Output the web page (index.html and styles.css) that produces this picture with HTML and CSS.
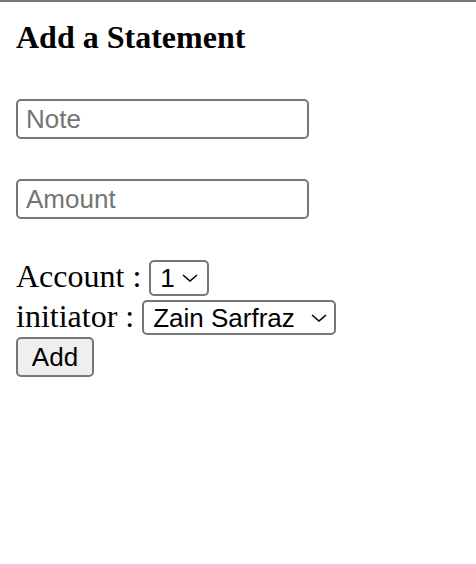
FILE: index.html
```html
<!DOCTYPE html>
<html lang="en">
<head>
<meta charset="utf-8">
<title>Add a Statement</title>
<link rel="stylesheet" href="styles.css">
</head>
<body>
<div class="topbar"></div>
<div class="page">
  <h3 class="title">Add a Statement</h3>
  <form class="form">
    <input class="field" type="text" placeholder="Note">
    <input class="field field-amount" type="text" placeholder="Amount">
    <div class="row row-account">
      <label class="label">Account :</label>
      <select class="select select-account"><option>1</option></select>
    </div>
    <div class="row row-initiator">
      <label class="label">initiator :</label>
      <select class="select select-initiator"><option>Zain Sarfraz</option></select>
    </div>
    <button class="btn" type="button">Add</button>
  </form>
</div>
</body>
</html>
```
FILE: styles.css
```css
html, body {
  margin: 0;
  padding: 0;
  background: #ffffff;
}
body {
  font-family: "Liberation Serif", "Times New Roman", serif;
  font-size: 32px;
  color: #000;
}
.topbar {
  height: 2px;
  background: #6f7a83;
}
.page {
  padding: 0 16px;
}
.title {
  margin: 18px 0 0;
  font-size: 32px;
  font-weight: bold;
  line-height: 35px;
}
.form {
  display: flex;
  flex-direction: column;
  align-items: flex-start;
}
.field {
  box-sizing: border-box;
  width: 293px;
  height: 40px;
  margin-top: 44px;
  padding: 0 8px;
  border: 2px solid #767676;
  border-radius: 5px;
  font-family: "Liberation Sans", Arial, sans-serif;
  font-size: 26px;
  color: #000;
  outline: none;
}
.field::placeholder {
  color: #757575;
}
.field-amount {
  margin-top: 40px;
}
.row {
  display: flex;
  align-items: baseline;
  gap: 8px;
}
.row-account {
  margin-top: 41px;
}
.row-initiator {
  margin-top: 4px;
}
.label {
  white-space: nowrap;
  line-height: 30px;
}
.select {
  appearance: none;
  -webkit-appearance: none;
  box-sizing: border-box;
  border: 2px solid #767676;
  border-radius: 5px;
  background-color: #fff;
  background-image: url("data:image/svg+xml,%3Csvg xmlns='http://www.w3.org/2000/svg' width='16' height='8' viewBox='0 0 16 8'%3E%3Cpath d='M1 1 L8 7 L15 1' fill='none' stroke='%23000' stroke-width='1.6'/%3E%3C/svg%3E");
  background-repeat: no-repeat;
  background-size: 16px 8px;
  font-family: "Liberation Sans", Arial, sans-serif;
  font-size: 26px;
  color: #000;
  padding: 0 30px 0 9px;
}
.select-account {
  height: 36px;
  width: 60px;
  background-position: right 9px center;
}
.select-initiator {
  height: 35px;
  width: 194px;
  background-position: right 7px center;
}
.btn {
  box-sizing: border-box;
  margin-top: 2px;
  width: 78px;
  height: 40px;
  border: 2px solid #767676;
  border-radius: 5px;
  background: #efefef;
  font-family: "Liberation Sans", Arial, sans-serif;
  font-size: 26px;
  color: #000;
  padding: 0;
}
```
